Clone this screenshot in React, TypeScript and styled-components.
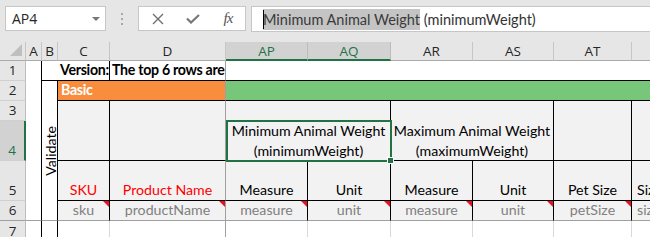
import React from 'react';
import styled, { createGlobalStyle } from 'styled-components';

const UI_FONT = `"Open Sans", "Noto Sans", sans-serif`;
const CELL_FONT = `Lato, "Liberation Sans", sans-serif`;
const GREEN = '#217346';
const FREEZE = '#a0a0a0';
const BLACK = '#000';
const GRID = '#d9d9d9';
const PANEL = '#f2f2f2';

const GlobalStyle = createGlobalStyle`
  html, body {
    margin: 0;
    padding: 0;
    background: #fff;
  }
  body {
    width: 650px;
    height: 237px;
    overflow: hidden;
  }
`;

const Window = styled.div`
  width: 650px;
  height: 237px;
  overflow: hidden;
  display: flex;
  flex-direction: column;
  background: #fff;
`;

/* ---------- formula bar ---------- */

const FormulaBar = styled.div`
  flex: none;
  height: 42px;
  box-sizing: border-box;
  padding: 6px 0 0 5px;
  display: flex;
  align-items: flex-start;
  background: #e6e6e6;
  font-family: ${UI_FONT};
`;

const NameBox = styled.div`
  width: 101px;
  height: 25px;
  box-sizing: border-box;
  border: 1px solid #c6c6c6;
  background: #fff;
  display: flex;
  align-items: center;
  justify-content: space-between;
  padding: 0 5px 0 6px;
  font-size: 14px;
  color: #262626;
`;

const DropCaret = styled.span`
  width: 0;
  height: 0;
  border-left: 4px solid transparent;
  border-right: 4px solid transparent;
  border-top: 4px solid #777;
`;

const Grip = styled.div`
  width: 32px;
  height: 25px;
  display: flex;
  flex-direction: column;
  align-items: center;
  justify-content: center;
  gap: 3px;

  span {
    width: 2px;
    height: 2px;
    background: #a8a8a8;
  }
`;

const FormulaButtons = styled.div`
  width: 108px;
  height: 25px;
  box-sizing: border-box;
  border: 1px solid #c6c6c6;
  background: #fff;
  display: flex;
  align-items: center;
  padding: 0 0 0 12px;
`;

const ToolButton = styled.span<{ $w: number }>`
  width: ${p => p.$w}px;
  display: flex;
  align-items: center;
  justify-content: center;
`;

const Fx = styled.span`
  font-family: "Liberation Serif", serif;
  font-style: italic;
  font-size: 15px;
  color: #555;
  letter-spacing: -1px;
`;

const FormulaInput = styled.div`
  margin-left: 5px;
  flex: 1;
  height: 26px;
  box-sizing: border-box;
  border: 1px solid #c6c6c6;
  border-right: none;
  background: #fff;
  display: flex;
  align-items: center;
  padding-left: 11px;
  font-family: ${CELL_FONT};
  font-size: 14.5px;
  color: #333;
  white-space: nowrap;
`;

const Selected = styled.span`
  position: relative;
  background: #c4c4c4;
  color: #3a3a3a;
  padding: 2px 0;

  &::before {
    content: '';
    position: absolute;
    left: 0;
    top: 1px;
    bottom: 1px;
    width: 1px;
    background: #000;
  }
`;

/* ---------- sheet grid ---------- */

const Sheet = styled.div`
  display: grid;
  grid-template-columns: 26px 16px 16px 52px 116px 82px 83px 82px 81px 78px 82px;
  grid-template-rows: 19px 20px 20px 20px 40px 40px 20px 20px;
  font-family: ${CELL_FONT};
  font-size: 14.2px;
`;

type Place = { $col: number; $row: number; $cs?: number; $rs?: number };

const place = (p: Place) => `
  grid-column: ${p.$col} / span ${p.$cs ?? 1};
  grid-row: ${p.$row} / span ${p.$rs ?? 1};
`;

const Corner = styled.div<Place>`
  ${place}
  position: relative;
  background: #e6e6e6;
  box-sizing: border-box;
  border-right: 1px solid #c6c6c6;
  border-bottom: 1px solid #ababab;

  &::after {
    content: '';
    position: absolute;
    right: 3px;
    bottom: 4px;
    width: 0;
    height: 0;
    border-left: 12px solid transparent;
    border-bottom: 12px solid #bfbfbf;
  }
`;

const ColHead = styled.div<Place & { $selected?: boolean }>`
  ${place}
  box-sizing: border-box;
  display: flex;
  align-items: center;
  justify-content: center;
  font-family: ${UI_FONT};
  font-size: 13.5px;
  background: ${p => (p.$selected ? '#d2d2d2' : '#e6e6e6')};
  color: ${p => (p.$selected ? GREEN : '#262626')};
  border-right: 1px solid ${p => (p.$selected ? '#bcbcbc' : '#c6c6c6')};
  border-bottom: ${p => (p.$selected ? `2px solid ${GREEN}` : '1px solid #ababab')};
`;

const RowHead = styled.div<Place & { $selected?: boolean; $freeze?: boolean }>`
  ${place}
  box-sizing: border-box;
  display: flex;
  align-items: flex-end;
  justify-content: center;
  line-height: 20px;
  font-family: ${UI_FONT};
  font-size: 13.5px;
  background: ${p => (p.$selected ? '#d2d2d2' : '#e6e6e6')};
  color: ${p => (p.$selected ? GREEN : '#262626')};
  border-right: ${p => (p.$selected ? `2px solid ${GREEN}` : '1px solid #bdbdbd')};
  border-bottom: 1px solid ${p => (p.$freeze ? FREEZE : '#d0d0d0')};
  overflow: hidden;
`;

const RowNumber = styled.span<{ $top?: boolean }>`
  align-self: ${p => (p.$top ? 'flex-start' : 'auto')};
`;

type CellProps = Place & {
  $bg?: string;
  $right?: string;
  $bottom?: string;
  $align?: 'left' | 'center';
  $valign?: 'center' | 'bottom';
  $color?: string;
  $bold?: boolean;
  $wrap?: boolean;
  $indent?: number;
};

const Cell = styled.div<CellProps>`
  ${place}
  position: relative;
  box-sizing: border-box;
  display: flex;
  justify-content: ${p => (p.$align === 'center' ? 'center' : 'flex-start')};
  align-items: ${p => (p.$valign === 'center' ? 'center' : 'flex-end')};
  text-align: ${p => p.$align ?? 'left'};
  padding: 0 2px 0 ${p => p.$indent ?? 2}px;
  line-height: 20px;
  white-space: ${p => (p.$wrap ? 'normal' : 'nowrap')};
  overflow: ${p => (p.$wrap ? 'visible' : 'hidden')};
  background: ${p => p.$bg ?? '#fff'};
  color: ${p => p.$color ?? BLACK};
  font-weight: ${p => (p.$bold ? 700 : 400)};
  letter-spacing: ${p => (p.$bold ? '-0.3px' : 'normal')};
  border-right: ${p => (p.$right ? `1px solid ${p.$right}` : 'none')};
  border-bottom: ${p => (p.$bottom ? `1px solid ${p.$bottom}` : 'none')};
`;

const VerticalLabel = styled.span`
  writing-mode: vertical-rl;
  transform: rotate(180deg);
  line-height: 15px;
  margin-right: -1px;
`;

const CommentMark = styled.span`
  position: absolute;
  top: 0;
  right: 0;
  width: 0;
  height: 0;
  border-top: 6px solid #e81123;
  border-left: 6px solid transparent;
`;

const SelectionFrame = styled.div`
  position: absolute;
  top: -1px;
  left: 0;
  right: -1px;
  bottom: -2px;
  border: 2px solid ${GREEN};
  z-index: 2;
  pointer-events: none;

  &::after {
    content: '';
    position: absolute;
    right: -4px;
    bottom: -4px;
    width: 5px;
    height: 5px;
    background: ${GREEN};
    border: 1px solid #fff;
  }
`;

const XIcon = () => (
  <svg width="12" height="12" viewBox="0 0 12 12">
    <path d="M1 1 L11 11 M11 1 L1 11" stroke="#6f6f6f" strokeWidth="1.4" fill="none" />
  </svg>
);

const CheckIcon = () => (
  <svg width="14" height="10" viewBox="0 0 14 10">
    <path d="M1 4.5 L5 8.5 L13 1" stroke="#777" strokeWidth="2.2" fill="none" />
  </svg>
);

type Field = { col: number; label: string; key: string; red?: boolean; last?: boolean };

const fields: Field[] = [
  { col: 4, label: 'SKU', key: 'sku', red: true },
  { col: 5, label: 'Product Name', key: 'productName', red: true },
  { col: 6, label: 'Measure', key: 'measure' },
  { col: 7, label: 'Unit', key: 'unit' },
  { col: 8, label: 'Measure', key: 'measure' },
  { col: 9, label: 'Unit', key: 'unit' },
  { col: 10, label: 'Pet Size', key: 'petSize' },
  { col: 11, label: 'Size', key: 'size', last: true },
];

const columns = ['A', 'B', 'C', 'D', 'AP', 'AQ', 'AR', 'AS', 'AT', ''];

const edge = (col: number) => (col === 5 ? FREEZE : BLACK);

export default function App() {
  return (
    <Window>
      <GlobalStyle />
      <FormulaBar>
        <NameBox>
          AP4
          <DropCaret />
        </NameBox>
        <Grip>
          <span />
          <span />
          <span />
        </Grip>
        <FormulaButtons>
          <ToolButton $w={14}>
            <XIcon />
          </ToolButton>
          <ToolButton $w={56}>
            <CheckIcon />
          </ToolButton>
          <ToolButton $w={14}>
            <Fx>fx</Fx>
          </ToolButton>
        </FormulaButtons>
        <FormulaInput>
          <Selected>Minimum Animal Weight</Selected>
          &nbsp;(minimumWeight)
        </FormulaInput>
      </FormulaBar>

      <Sheet>
        <Corner $col={1} $row={1} />
        {columns.map((c, i) => (
          <ColHead key={i} $col={i + 2} $row={1} $selected={c === 'AP' || c === 'AQ'}>
            {c}
          </ColHead>
        ))}
        {[1, 2, 3, 4, 5, 6, 7].map(n => (
          <RowHead key={n} $col={1} $row={n + 1} $selected={n === 4} $freeze={n === 6}>
            <RowNumber $top={n === 7}>{n}</RowNumber>
          </RowHead>
        ))}

        {/* column A */}
        {[1, 2, 3, 4, 5, 6, 7].map(n => (
          <Cell key={n} $col={2} $row={n + 1} $right={BLACK} $bottom={n === 6 ? FREEZE : undefined} />
        ))}

        {/* row 1 */}
        <Cell $col={3} $row={2} $bottom={BLACK} />
        <Cell $col={4} $row={2} $bold $right={BLACK} $bottom={BLACK}>
          Version:
        </Cell>
        <Cell $col={5} $row={2} $bold $right={FREEZE} $bottom={BLACK}>
          The top 6 rows are
        </Cell>
        <Cell $col={6} $row={2} $cs={6} $bottom={BLACK} />

        {/* row 2 */}
        <Cell $col={3} $row={3} $rs={5} $right={BLACK} $bottom={FREEZE} $align="center" $valign="center">
          <VerticalLabel>Validate</VerticalLabel>
        </Cell>
        <Cell $col={4} $row={3} $cs={2} $bg="#f98d3e" $color="#fff" $bold $right={FREEZE} $bottom={BLACK} $indent={3}>
          Basic
        </Cell>
        <Cell $col={6} $row={3} $cs={6} $bg="#78c679" $bottom={BLACK} />

        {/* rows 3-4 */}
        <Cell $col={4} $row={4} $rs={2} $bg={PANEL} $right={BLACK} $bottom={BLACK} />
        <Cell $col={5} $row={4} $rs={2} $bg={PANEL} $right={FREEZE} $bottom={BLACK} />
        <Cell $col={6} $row={4} $cs={2} $bg={PANEL} $right={BLACK} />
        <Cell $col={8} $row={4} $cs={2} $bg={PANEL} $right={BLACK} />
        <Cell $col={10} $row={4} $rs={2} $bg={PANEL} $right={BLACK} $bottom={BLACK} />
        <Cell $col={11} $row={4} $rs={2} $bg={PANEL} $bottom={BLACK} />
        <Cell $col={6} $row={5} $cs={2} $bg={PANEL} $bottom={BLACK} $align="center" $valign="center" $wrap>
          <span>
            Minimum Animal Weight
            <br />
            (minimumWeight)
          </span>
          <SelectionFrame />
        </Cell>
        <Cell $col={8} $row={5} $cs={2} $bg={PANEL} $right={BLACK} $bottom={BLACK} $align="center" $valign="center" $wrap>
          <span>
            Maximum Animal Weight
            <br />
            (maximumWeight)
          </span>
        </Cell>

        {/* rows 5-7 */}
        {fields.map(f => (
          <React.Fragment key={f.col}>
            <Cell
              $col={f.col}
              $row={6}
              $bg={PANEL}
              $right={f.last ? undefined : edge(f.col)}
              $bottom={BLACK}
              $align={f.last ? 'left' : 'center'}
              $indent={f.last ? 5 : 2}
              $color={f.red ? '#ff0000' : BLACK}
            >
              {f.label}
            </Cell>
            <Cell
              $col={f.col}
              $row={7}
              $bg={PANEL}
              $right={f.last ? undefined : edge(f.col)}
              $bottom={FREEZE}
              $align={f.last ? 'left' : 'center'}
              $indent={f.last ? 5 : 2}
              $color="#808080"
            >
              {f.key}
              {!f.last && <CommentMark />}
            </Cell>
            <Cell $col={f.col} $row={8} $right={f.col === 5 ? FREEZE : GRID} />
          </React.Fragment>
        ))}
        <Cell $col={3} $row={8} $right={BLACK} />
      </Sheet>
    </Window>
  );
}
